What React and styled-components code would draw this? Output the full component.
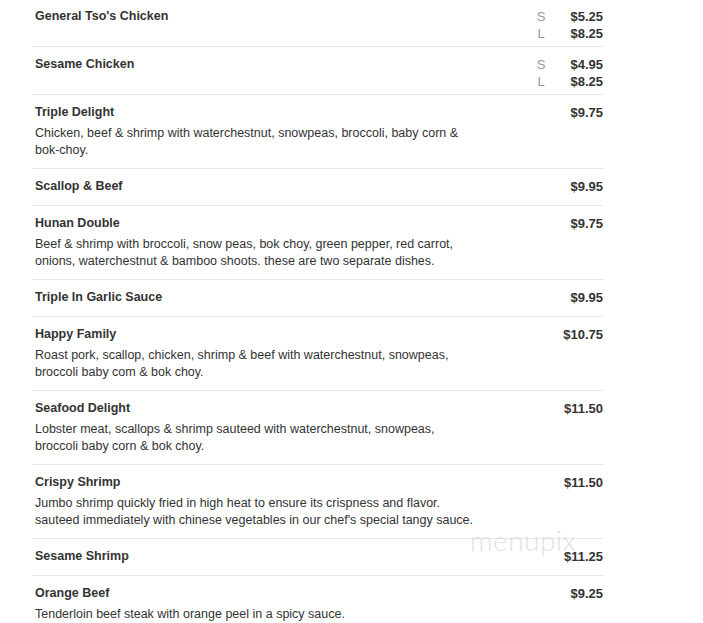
import React from 'react'
import styled, { createGlobalStyle } from 'styled-components'

const GlobalStyle = createGlobalStyle`
body {
  margin: 0;
  background: #fff;
  font-family: "Liberation Sans", Arial, sans-serif;
  color: #333;
}
`

const Page = styled.div`
position: relative;
width: 570px;
margin: -1px 0 0 33px;
`

const Item = styled.div`
display: flex;
justify-content: space-between;
align-items: flex-start;
padding: 9px 0 10px 2px;
border-bottom: 1px solid #e6e6e6;
&:last-child {
  border-bottom: none;
}
`

const Info = styled.div`
display: flex;
flex-direction: column;
`

const Name = styled.div`
font-size: 12.5px;
font-weight: bold;
line-height: 17px;
color: #333;
`

const Desc = styled.div`
font-size: 12.5px;
line-height: 16.5px;
margin-top: 4px;
width: 443px;
color: #333;
`

const Prices = styled.div`
display: grid;
grid-template-columns: auto auto;
column-gap: 25px;
line-height: 17px;
margin-bottom: ${p => (p.multi ? '-6px' : '0')};
`

const Size = styled.span`
font-size: 13px;
color: #999;
text-align: center;
`

const Price = styled.span`
font-size: 13px;
font-weight: bold;
color: #333;
text-align: right;
grid-column: 2;
`

const Watermark = styled.div`
position: absolute;
left: 437px;
top: 524px;
font-family: Lato, "Open Sans", sans-serif;
font-weight: 300;
font-size: 28px;
letter-spacing: 0.5px;
color: rgba(195, 195, 195, 0.5);
pointer-events: none;
`

const menu = [
  { name: "General Tso's Chicken", sizes: [['S', '$5.25'], ['L', '$8.25']] },
  { name: 'Sesame Chicken', sizes: [['S', '$4.95'], ['L', '$8.25']] },
  { name: 'Triple Delight', price: '$9.75', desc: 'Chicken, beef & shrimp with waterchestnut, snowpeas, broccoli, baby corn & bok-choy.' },
  { name: 'Scallop & Beef', price: '$9.95' },
  { name: 'Hunan Double', price: '$9.75', desc: 'Beef & shrimp with broccoli, snow peas, bok choy, green pepper, red carrot, onions, waterchestnut & bamboo shoots. these are two separate dishes.' },
  { name: 'Triple In Garlic Sauce', price: '$9.95' },
  { name: 'Happy Family', price: '$10.75', desc: 'Roast pork, scallop, chicken, shrimp & beef with waterchestnut, snowpeas, broccoli baby com & bok choy.' },
  { name: 'Seafood Delight', price: '$11.50', desc: 'Lobster meat, scallops & shrimp sauteed with waterchestnut, snowpeas, broccoli baby corn & bok choy.' },
  { name: 'Crispy Shrimp', price: '$11.50', desc: "Jumbo shrimp quickly fried in high heat to ensure its crispness and flavor. sauteed immediately with chinese vegetables in our chef's special tangy sauce." },
  { name: 'Sesame Shrimp', price: '$11.25' },
  { name: 'Orange Beef', price: '$9.25', desc: 'Tenderloin beef steak with orange peel in a spicy sauce.' },
]

const App = () => {
  return (
    <Page>
      <GlobalStyle />
      {menu.map(item => (
        <Item key={item.name}>
          <Info>
            <Name>{item.name}</Name>
            {item.desc && <Desc>{item.desc}</Desc>}
          </Info>
          {item.sizes ? (
            <Prices multi>
              {item.sizes.map(([s, p]) => (
                <React.Fragment key={s}>
                  <Size>{s}</Size>
                  <Price>{p}</Price>
                </React.Fragment>
              ))}
            </Prices>
          ) : (
            <Prices>
              <Price>{item.price}</Price>
            </Prices>
          )}
        </Item>
      ))}
      <Watermark>menupix</Watermark>
    </Page>
  )
}

export default App
